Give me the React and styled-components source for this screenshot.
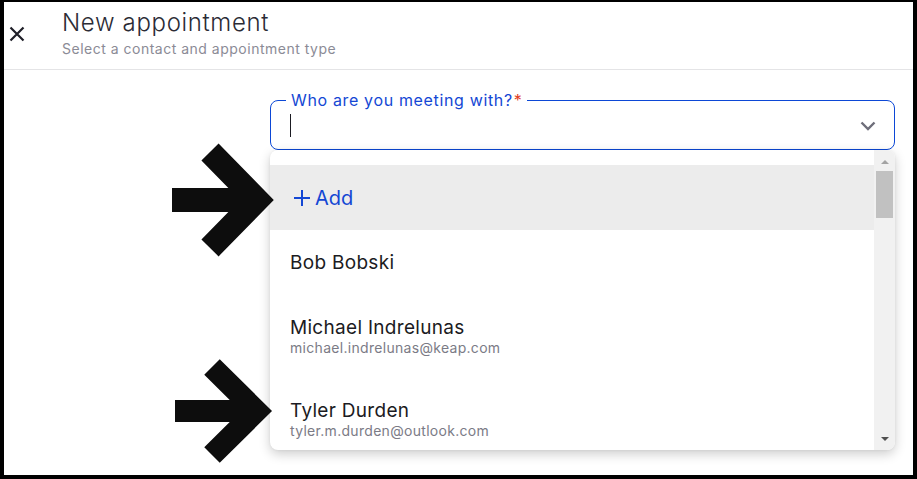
import React from "react";
import styled, { createGlobalStyle } from "styled-components";

const Global = createGlobalStyle`
  html, body { margin: 0; padding: 0; background: #000; }
  * { box-sizing: border-box; }
  body { font-family: Inter, "Open Sans", sans-serif; }
`;

const Frame = styled.div`
  position: relative;
  width: 917px;
  height: 479px;
  border-style: solid;
  border-color: #000;
  border-width: 2px 4px 4px 4px;
  background: #fff;
  overflow: hidden;
`;

const Header = styled.header`
  display: flex;
  align-items: center;
  gap: 37px;
  padding: 7px 0 11px 5px;
  border-bottom: 1px solid #e4e4e6;
`;

const CloseButton = styled.button`
  width: 16px;
  height: 16px;
  padding: 0;
  border: 0;
  background: none;
  display: flex;
  color: #1f1f28;
`;

const Titles = styled.div`
  display: flex;
  flex-direction: column;
  gap: 3px;
`;

const Title = styled.h1`
  margin: 0;
  font-size: 24px;
  line-height: 28px;
  font-weight: 300;
  letter-spacing: 0.65px;
  color: #2b2b35;
`;

const Subtitle = styled.div`
  font-size: 14px;
  line-height: 18px;
  letter-spacing: 0.5px;
  color: #8b8b96;
`;

const Body = styled.main`
  padding: 20px 0 0 266px;
`;

const Field = styled.fieldset`
  margin: 0;
  width: 625px;
  min-width: 0;
  padding: 0 0 0 15px;
  border: 1px solid #0c48d6;
  border-radius: 8px;
`;

const Legend = styled.legend`
  padding: 0 5px;
  font-size: 16px;
  line-height: 20px;
  letter-spacing: 0.65px;
  color: #1447d4;
`;

const Required = styled.span`
  color: #e0401f;
  margin-left: 1px;
`;

const InputRow = styled.div`
  display: flex;
  align-items: center;
  height: 39px;
  padding: 0 18px 8px 4px;
`;

const Caret = styled.span`
  width: 1px;
  height: 23px;
  background: #1b1b22;
`;

const Spacer = styled.span`
  flex: 1;
`;

const Dropdown = styled.div`
  display: flex;
  width: 625px;
  height: 300px;
  border-radius: 8px;
  background: #fff;
  overflow: hidden;
  box-shadow: 0 4px 12px rgba(0, 0, 0, 0.2), 0 0 3px rgba(0, 0, 0, 0.06);
`;

const List = styled.ul`
  flex: 1;
  margin: 0;
  padding: 15px 0 0;
  list-style: none;
`;

const Option = styled.li`
  display: flex;
  flex-direction: column;
  justify-content: center;
  min-height: ${(p) => (p.$tall ? 83 : 65)}px;
  padding: 0 20px;
  background: ${(p) => (p.$active ? "#ececec" : "transparent")};
`;

const AddLabel = styled.span`
  display: flex;
  align-items: center;
  gap: 4px;
  padding-left: 3px;
  font-size: 20px;
  line-height: 24px;
  color: #1447d4;
`;

const Name = styled.span`
  font-size: 19px;
  line-height: 22px;
  letter-spacing: 0.3px;
  color: #1b1b22;
`;

const Email = styled.span`
  font-size: 14px;
  line-height: 18px;
  letter-spacing: 0.3px;
  color: #7b7b86;
`;

const Scrollbar = styled.div`
  width: 21px;
  display: flex;
  flex-direction: column;
  align-items: center;
  padding: 10px 2px 9px;
  background: #f1f1f1;
`;

const Arrow = styled.span`
  width: 0;
  height: 0;
  border-left: 4.5px solid transparent;
  border-right: 4.5px solid transparent;
  ${(p) =>
    p.$down
      ? "border-top: 4px solid #505050;"
      : "border-bottom: 4px solid #a3a3a3; margin-bottom: 7px;"}
`;

const Thumb = styled.div`
  width: 17px;
  height: 47px;
  background: #c1c1c1;
`;

const Annotations = styled.svg`
  position: absolute;
  top: -2px;
  left: -4px;
  pointer-events: none;
`;

const contacts = [
  { name: "Bob Bobski" },
  { name: "Michael Indrelunas", email: "michael.indrelunas@keap.com" },
  { name: "Tyler Durden", email: "tyler.m.durden@outlook.com" },
];

export default function App() {
  return (
    <Frame>
      <Global />
      <Header>
        <CloseButton aria-label="Close">
          <svg width="16" height="16" viewBox="0 0 16 16">
            <path d="M1.5 1.5 L14.5 14.5 M14.5 1.5 L1.5 14.5" stroke="currentColor" strokeWidth="2.2" />
          </svg>
        </CloseButton>
        <Titles>
          <Title>New appointment</Title>
          <Subtitle>Select a contact and appointment type</Subtitle>
        </Titles>
      </Header>
      <Body>
        <Field>
          <Legend>
            Who are you meeting with?<Required>*</Required>
          </Legend>
          <InputRow>
            <Caret />
            <Spacer />
            <svg width="16" height="10" viewBox="0 0 16 10">
              <path d="M1.5 1.5 L8 8 L14.5 1.5" fill="none" stroke="#6e6e7a" strokeWidth="2.4" />
            </svg>
          </InputRow>
        </Field>
        <Dropdown>
          <List>
            <Option $active>
              <AddLabel>
                <svg width="18" height="18" viewBox="0 0 18 18">
                  <path d="M9 1 V17 M1 9 H17" stroke="currentColor" strokeWidth="2" />
                </svg>
                Add
              </AddLabel>
            </Option>
            {contacts.map((c) => (
              <Option key={c.name} $tall={!!c.email}>
                <Name>{c.name}</Name>
                {c.email && <Email>{c.email}</Email>}
              </Option>
            ))}
          </List>
          <Scrollbar>
            <Arrow />
            <Thumb />
            <Spacer />
            <Arrow $down />
          </Scrollbar>
        </Dropdown>
      </Body>
      <Annotations width="917" height="479" viewBox="0 0 917 479">
        <g fill="none" stroke="#0d0d0d" strokeLinejoin="miter">
          <path d="M172 200 H257 M210 152 L257 200 L210 248" strokeWidth="24" />
          <path d="M175 411 H256 M212 367 L256.4 411 L212 455" strokeWidth="22" />
        </g>
      </Annotations>
    </Frame>
  );
}
